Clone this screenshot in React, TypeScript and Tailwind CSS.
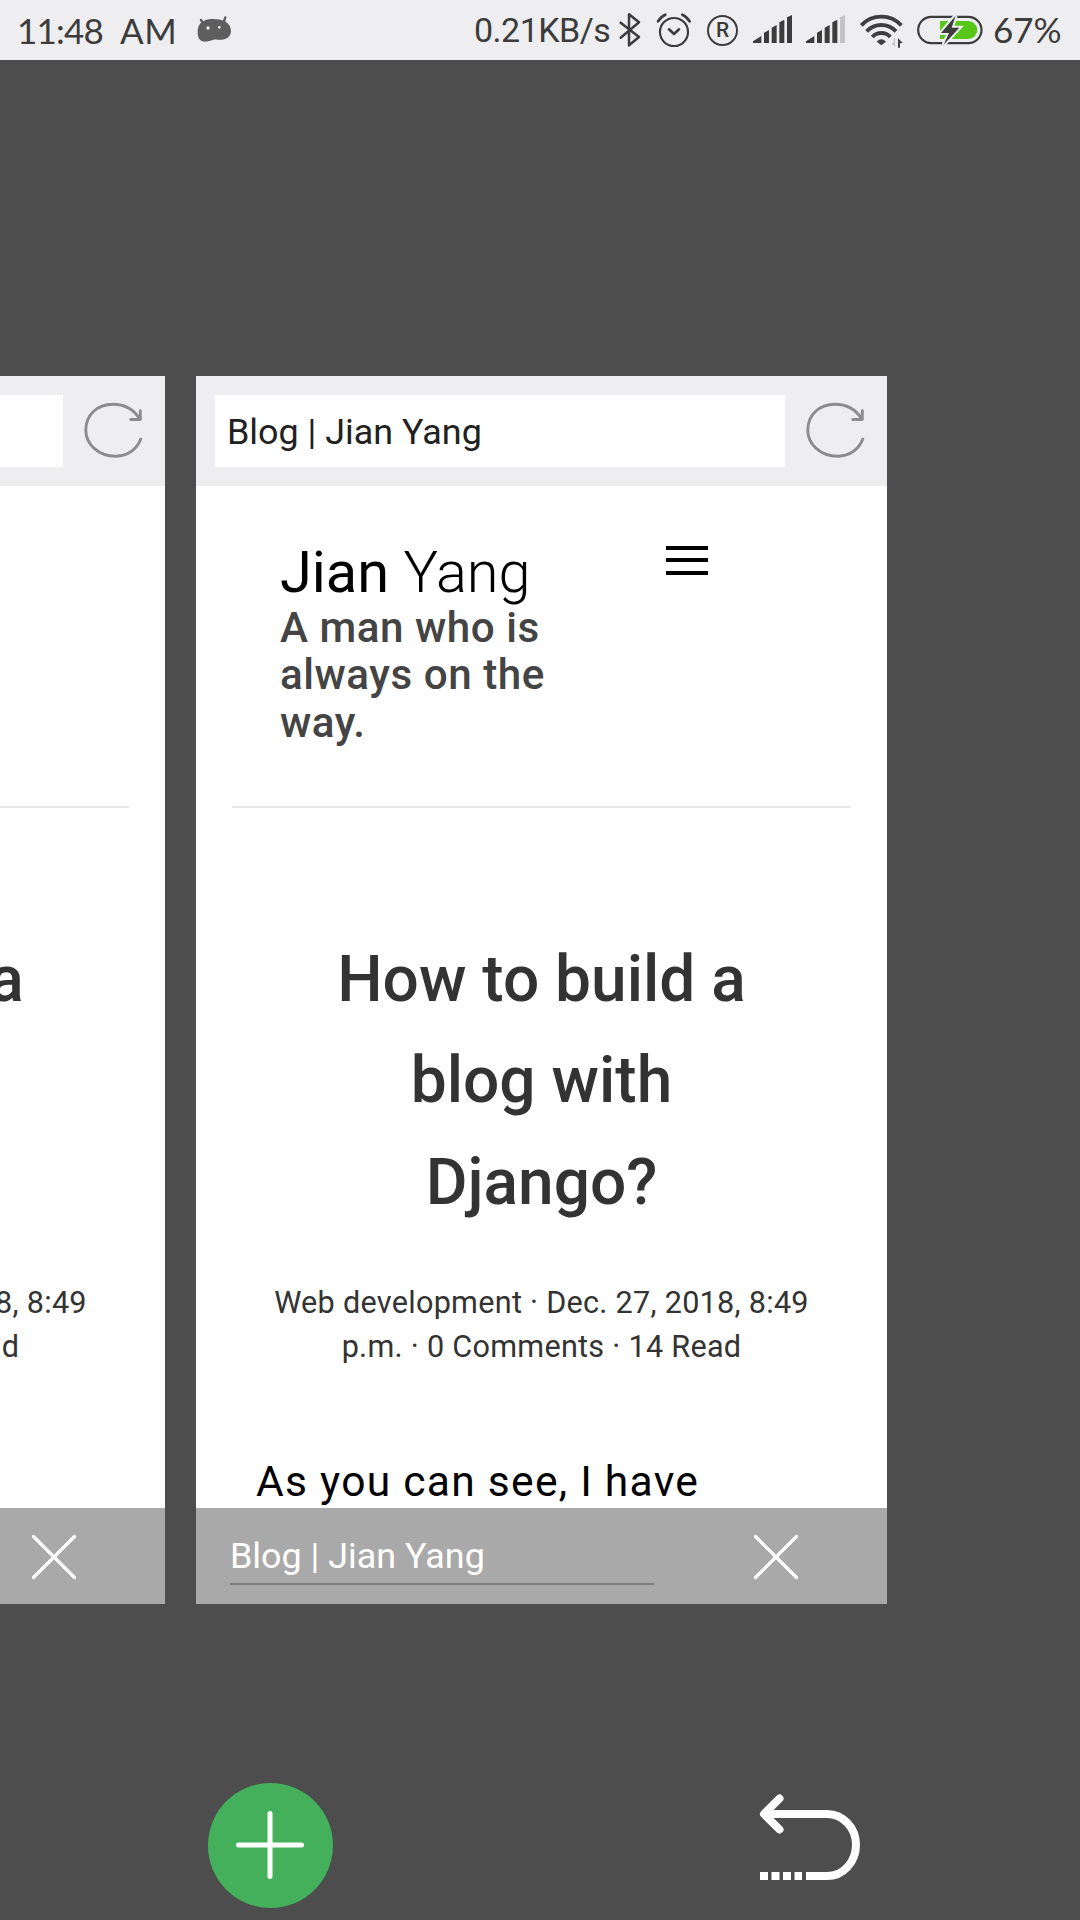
function StatusBar() {
  return (
    <header className="flex h-[60px] shrink-0 items-center bg-[#eeeef0] text-[#3c3c3c]">
      <div className="flex w-[473px] items-center">
        <span className="ml-[17px] w-[91px] font-[Lato,sans-serif] text-[35px] leading-[60px] tracking-[-0.800px] whitespace-nowrap">11:48</span>
        <span className="ml-[12px] w-[60px] font-[Lato,sans-serif] text-[35px] leading-[60px] tracking-[0.500px] whitespace-nowrap">AM</span>
        <svg className="ml-[16px] h-[36px] w-[36px]" viewBox="588 36 108 108" fill="#5e5e5f">
          <path d="M593 96 C592 72 608 58 635 57 C668 56 692 66 693 93 C693 114 672 122 652 119 C638 117 632 125 613 125 C598 124 593 112 593 96Z" />
          <path d="M612 74 L603 60 M671 67 L676 52" stroke="#5e5e5f" strokeWidth="7" strokeLinecap="round" fill="none" />
          <circle cx="624" cy="84" r="5" fill="#eeeef0" />
          <circle cx="658" cy="82" r="4" fill="#eeeef0" />
        </svg>
      </div>
      <span className="w-[145px] pl-px font-[Roboto] text-[34px] leading-[60px] tracking-[-0.500px] whitespace-nowrap">0.21KB/s</span>
      <svg className="h-[36px] w-[24px]" viewBox="474 36 72 108" fill="none" stroke="#3c3c3c" strokeWidth="7.500" strokeLinejoin="round" strokeLinecap="round">
        <path d="M482 68 L537 111 L507 136 V43 L537 67 L482 113" />
      </svg>
      <svg className="ml-[13px] h-[36px] w-[37px]" viewBox="585 36 111 108" fill="none" stroke="#3c3c3c" strokeWidth="6.500" strokeLinecap="round" strokeLinejoin="round">
        <circle cx="642" cy="96" r="42" />
        <path d="M627 88 L642 102 L657 88" strokeWidth="8" />
        <path d="M594 64 Q602 50 616 44 M667 44 Q681 50 689 64" strokeWidth="8" />
      </svg>
      <div className="ml-[15px] flex h-[31px] w-[31px] items-center justify-center rounded-full border-2 border-[#3c3c3c]">
        <span className="font-[Roboto] text-[21px] leading-none font-medium">R</span>
      </div>
      <SignalIcon className="ml-[14px] h-[36px] w-[41px]" last="#3c3c3c" />
      <SignalIcon className="ml-[12px] h-[36px] w-[41px]" last="#c3c3c5" />
      <svg className="ml-[13px] h-[36px] w-[45px]" viewBox="267 36 135 108" fill="none" stroke="#3f3f3f" strokeWidth="11.500">
        <path d="M274 76 Q298 50 334 50 Q370 50 394 76" />
        <path d="M290 94 Q308 75 334 75 Q360 75 378 94" />
        <path d="M307 111 Q317 99 334 99 Q351 99 361 111" />
        <path d="M320 125 Q334 111 348 125 L334 136Z" fill="#3f3f3f" stroke="none" />
        <path d="M375 114 V142 L365 129 H371 V114Z" fill="#c3c3c5" stroke="none" />
        <path d="M384 143 V114 L398 129 H390 V143Z" fill="#3f3f3f" stroke="none" />
      </svg>
      <svg className="ml-[12px] h-[36px] w-[68px]" viewBox="438 36 204 108">
        <rect x="444.500" y="50.500" width="190" height="79" rx="39.500" fill="none" stroke="#3c3c3c" strokeWidth="6.500" />
        <path d="M510 63 H595 A27 27 0 0 1 595 117 H510Z" fill="#57c717" />
        <path d="M557 47 L513 99 H537 L521 134 L568 83 H545Z" fill="#3c3c3c" stroke="#eeeef0" strokeWidth="12" paintOrder="stroke" />
      </svg>
      <span className="ml-[9px] w-[79px] pb-[2px] font-[Lato,sans-serif] text-[35px] leading-[58px] whitespace-nowrap">67%</span>
    </header>
  );
}

function SignalIcon({ className, last }: { className: string; last: string }) {
  return (
    <svg className={className} viewBox="105 36 123 108" fill="#3c3c3c">
      <path d="M108 129 V124 L133 108 V129Z" />
      <path d="M141 129 V98 L156 90 V129Z" />
      <path d="M164 129 V83 L179 75 V129Z" />
      <path d="M187 129 V67 L202 59 V129Z" />
      <path d="M210 129 V52 L225 45 V129Z" fill={last} />
    </svg>
  );
}

function TabCard() {
  return (
    <article className="flex h-[1228px] w-[691px] shrink-0 flex-col bg-white">
      <div className="flex h-[110px] shrink-0 items-center bg-[#eeeef0] pl-[19px]">
        <div className="h-[72px] w-[570px] bg-white pl-[12px] text-[35.900px] leading-[75px] whitespace-nowrap text-[#212121]">Blog | Jian Yang</div>
        <svg className="ml-[20px] h-[60px] w-[60px]" viewBox="0 0 60 60" fill="none" stroke="#8c8c8c" strokeWidth="2.900" strokeLinecap="round" strokeLinejoin="round">
          <path d="M57.800 38 C54 48 45 55 33 55.200 C15 55.200 2.800 43 2.800 29 C2.800 14 14 3.200 30 3.200 C42 3.200 51 9 56.500 17.500" />
          <path d="M57.300 9.800 V18.500 H47.800" />
        </svg>
      </div>
      <div className="flex h-[1022px] flex-col overflow-hidden px-[36px]">
        <div className="flex h-[320px] shrink-0 pl-[48px]">
          <div className="w-[300px] pt-[54px]">
            <h1 className="text-[57.700px] leading-[64px] whitespace-nowrap text-black">
              Jian <span className="font-light">Yang</span>
            </h1>
            <p className="text-[42.200px] leading-[47.300px] font-medium tracking-[0.520px] text-[#444]">
              A man who is
              <br />
              always on the
              <br />
              way.
            </p>
          </div>
          <div className="ml-[86px] flex w-[42px] flex-col gap-[8.500px] pt-[59.500px]">
            <div className="h-[4px] bg-black" />
            <div className="h-[4px] bg-black" />
            <div className="h-[4px] bg-black" />
          </div>
        </div>
        <div className="h-[2px] shrink-0 bg-[#e8e8e8]" />
        <h2 className="mt-[120.500px] text-center text-[64px] leading-[101.700px] font-medium text-[#333]">
          How to build a
          <br />
          blog with
          <br />
          Django?
        </h2>
        <p className="mt-[47.500px] text-center text-[30.600px] leading-[43.800px] tracking-[0.280px] whitespace-nowrap text-[#333]">
          Web development · Dec. 27, 2018, 8:49
          <br />
          p.m. · 0 Comments · 14 Read
        </p>
        <p className="mt-[80px] pl-[24px] text-[42.600px] leading-[64px] tracking-[1.250px] whitespace-nowrap text-black">As you can see, I have</p>
      </div>
      <div className="flex h-[96px] shrink-0 items-start bg-[#a9a9a9] pl-[34px]">
        <div className="h-[77px] w-[424px] border-b-2 border-[#808080] text-[35.900px] leading-[97px] whitespace-nowrap text-white">Blog | Jian Yang</div>
        <svg className="mt-[25px] ml-[98px] h-[48px] w-[48px]" viewBox="0 0 48 48" stroke="#fff" strokeWidth="3.200" strokeLinecap="round">
          <path d="M3.500 3.500 L44.500 44.500 M44.500 3.500 L3.500 44.500" />
        </svg>
      </div>
    </article>
  );
}

export default function App() {
  return (
    <div className="flex h-[1920px] w-[1080px] flex-col overflow-hidden bg-[#4d4d4d] font-[Roboto,sans-serif]">
      <StatusBar />
      <main className="mt-[316px] -ml-[526px] flex gap-[31px]">
        <TabCard />
        <TabCard />
      </main>
      <footer className="mt-[178.500px] flex items-start pl-[207.500px]">
        <button className="flex h-[125px] w-[125px] items-center justify-center rounded-full bg-[#44b05c]">
          <svg className="h-[72px] w-[72px]" viewBox="0 0 72 72" stroke="#fff" strokeWidth="5" strokeLinecap="round">
            <path d="M4.500 36 H67.500 M36 4.500 V67.500" />
          </svg>
        </button>
        <svg className="mt-[9.500px] ml-[424.500px] h-[92px] w-[106px]" viewBox="757 1792 106 92" fill="none" stroke="#fff" strokeWidth="8">
          <path d="M764 1814 H827 A29 31 0 0 1 827 1876 H806" />
          <path d="M779.500 1798.500 L764 1814 L779.500 1829.500" strokeLinecap="round" strokeLinejoin="round" />
          <path d="M760 1876 H802" strokeDasharray="8 3.500" />
        </svg>
      </footer>
    </div>
  );
}
